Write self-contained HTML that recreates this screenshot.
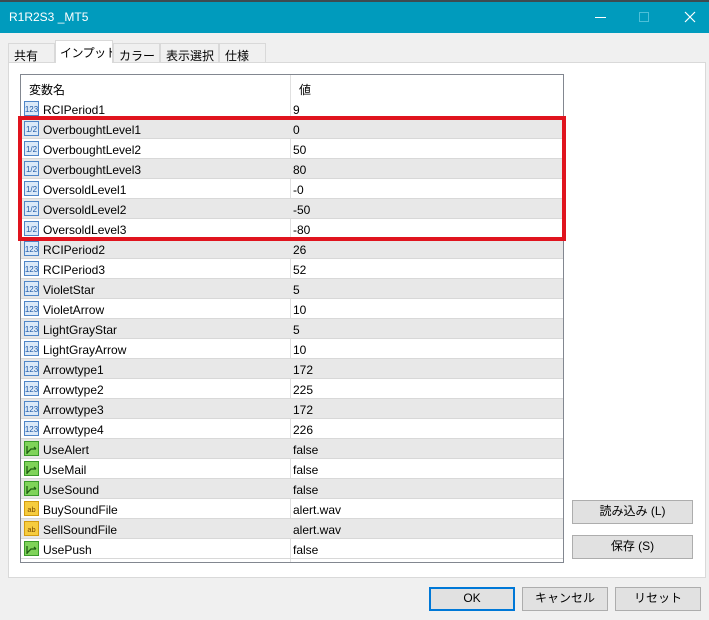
<!DOCTYPE html>
<html><head><meta charset="utf-8"><style>
*{box-sizing:border-box;margin:0;padding:0}
body{width:709px;height:620px;background:#f0f0f0;font-family:"Liberation Sans","Noto Sans CJK JP",sans-serif;font-size:12px;color:#000;position:relative;overflow:hidden}
.abs{position:absolute}
.title{left:0;top:0;width:709px;height:33px;background:#009bbd;border-top:2px solid #3d4a50;color:#fff;font-size:12px}
.tab{position:absolute;top:43px;height:20px;border:1px solid #d9d9d9;border-bottom:none;background:#f0f0f0;padding:3px 0 0 5px;font-size:12px;white-space:nowrap;overflow:hidden}
.panel{left:8px;top:62px;width:698px;height:516px;background:#fff;border:1px solid #d9d9d9}
.list{left:20px;top:74px;width:544px;height:489px;border:1px solid #828790;background:#fff;overflow:hidden}
.row{position:absolute;left:0;width:542px;height:20px;border-bottom:1px solid #d8d8d8}
.row span{position:absolute;top:4px}
.n{left:22px}.v{left:272px}
.ic{position:absolute;left:3px;top:2px;width:15px;height:15px}
.g{background:#e8e8e8}
.btn{position:absolute;height:24px;border:1px solid #adadad;background:#e1e1e1;text-align:center;line-height:21px;font-size:12px;white-space:nowrap}
</style></head><body>
<div class="abs title"><span class="abs" style="left:9px;top:8px">R1R2S3 _MT5</span>
<div class="abs" style="left:595px;top:15px;width:11px;height:1px;background:#fff"></div>
<div class="abs" style="left:639px;top:10px;width:10px;height:10px;border:1px solid #4dbfd8"></div>
<svg class="abs" style="left:684px;top:9px" width="12" height="12"><path d="M1 1L11 11M11 1L1 11" stroke="#fff" stroke-width="1.2"/></svg>
</div>
<div class="tab" style="left:8px;width:47px">共有</div>
<div class="tab" style="left:55px;top:40px;height:23px;width:58px;background:#fff;z-index:2;padding-left:4px;letter-spacing:-0.5px">インプット</div>
<div class="tab" style="left:113px;width:47px">カラー</div>
<div class="tab" style="left:160px;width:59px">表示選択</div>
<div class="tab" style="left:219px;width:47px">仕様</div>
<div class="abs panel"></div>
<div class="abs list">
<div class="row" style="top:0;height:24px;border-bottom:none"><span style="left:8px;top:6px">変数名</span><span style="left:278px;top:6px">値</span></div>
<div class="abs" style="left:269px;top:0;width:1px;height:489px;background:#e0e0e0"></div>
<div id="rows"></div>
</div>
<div class="abs" style="left:18px;top:116px;width:548px;height:125px;border:4px solid #e0141e"></div>
<div class="btn" style="left:572px;top:500px;width:121px">読み込み (L)</div>
<div class="btn" style="left:572px;top:535px;width:121px">保存 (S)</div>
<div class="btn" style="left:429px;top:587px;width:86px;border:2px solid #0078d7;line-height:19px">OK</div>
<div class="btn" style="left:522px;top:587px;width:86px">キャンセル</div>
<div class="btn" style="left:615px;top:587px;width:86px">リセット</div>
<script>
var d=[["RCIPeriod1","9","i"],["OverboughtLevel1","0","h"],["OverboughtLevel2","50","h"],["OverboughtLevel3","80","h"],["OversoldLevel1","-0","h"],["OversoldLevel2","-50","h"],["OversoldLevel3","-80","h"],["RCIPeriod2","26","i"],["RCIPeriod3","52","i"],["VioletStar","5","i"],["VioletArrow","10","i"],["LightGrayStar","5","i"],["LightGrayArrow","10","i"],["Arrowtype1","172","i"],["Arrowtype2","225","i"],["Arrowtype3","172","i"],["Arrowtype4","226","i"],["UseAlert","false","b"],["UseMail","false","b"],["UseSound","false","b"],["BuySoundFile","alert.wav","s"],["SellSoundFile","alert.wav","s"],["UsePush","false","b"]];
var h="";
d.forEach(function(r,i){
var ic;
if(r[2]=="i")ic='<svg class="ic" viewBox="0 0 15 15"><rect x="0.5" y="0.5" width="14" height="14" fill="#dbe9f8" stroke="#4f86c8"/><text x="7.5" y="11" font-size="8" text-anchor="middle" fill="#1f5aa6" font-family="Liberation Sans">123</text></svg>';
else if(r[2]=="h")ic='<svg class="ic" viewBox="0 0 15 15"><rect x="0.5" y="0.5" width="14" height="14" fill="#dbe9f8" stroke="#4f86c8"/><text x="7.5" y="11" font-size="8" text-anchor="middle" fill="#1f5aa6" font-family="Liberation Sans">1/2</text></svg>';
else if(r[2]=="b")ic='<svg class="ic" viewBox="0 0 15 15"><rect x="0.5" y="0.5" width="14" height="14" fill="#7fd35a" stroke="#3a9a2a"/><path d="M3 13V5M3 12L7 8L12 8M10 6L12 8" stroke="#1f5e12" fill="none" stroke-width="1.3"/></svg>';
else ic='<svg class="ic" viewBox="0 0 15 15"><rect x="0.5" y="0.5" width="14" height="14" fill="#f6cc3f" stroke="#d39c10"/><text x="7.5" y="11" font-size="7.5" text-anchor="middle" fill="#7a4a00" font-family="Liberation Sans">ab</text></svg>';
h+='<div class="row'+(i%2?' g':'')+'" style="top:'+(24+i*20)+'px">'+ic+'<span class="n">'+r[0]+'</span><span class="v">'+r[1]+'</span></div>';
});
document.getElementById("rows").innerHTML=h;
</script>
</body></html>
